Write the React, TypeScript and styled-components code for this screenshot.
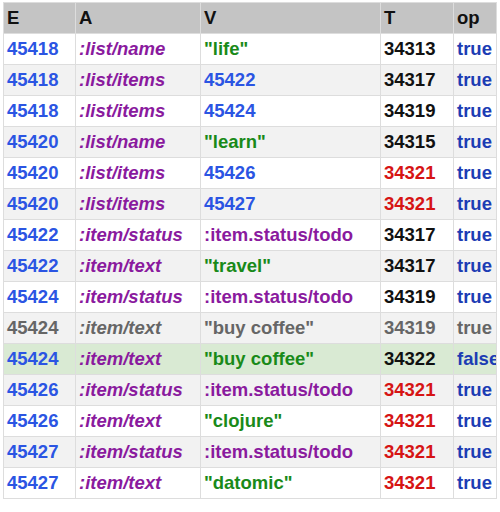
import React from "react";
import styled, { createGlobalStyle } from "styled-components";

const G = createGlobalStyle`body{margin:0;padding:2px 3px;font-family:"Liberation Sans",Arial,sans-serif;background:#fff;}`;
const Table = styled.table`border-collapse:collapse;table-layout:fixed;width:494px;font-weight:bold;font-size:18.5px;`;
const Th = styled.th<{ $w?: number }>`background:#c4c4c4;text-align:left;padding:0 3px;height:30px;border:1px solid #ddd;color:#111;width:${p => (p.$w ? p.$w + "px" : "auto")};`;
const Tr = styled.tr<{ $bg: string }>`background:${p => p.$bg};`;
const Td = styled.td<{ $c: string; $i?: boolean }>`border:1px solid #ddd;padding:0 3px;height:30px;color:${p => p.$c};font-style:${p => (p.$i ? "italic" : "normal")};white-space:nowrap;overflow:hidden;`;

const BLUE = "#2b55e3", PUR = "#8a1a9e", GRN = "#198a19", OP = "#1c3cb4", RED = "#d61414", GREY = "#666";
type R = [string, string, string, string, string];
const rows: R[] = [
  ["45418", ":list/name", '"life"', "34313", "true"],
  ["45418", ":list/items", "45422", "34317", "true"],
  ["45418", ":list/items", "45424", "34319", "true"],
  ["45420", ":list/name", '"learn"', "34315", "true"],
  ["45420", ":list/items", "45426", "34321", "true"],
  ["45420", ":list/items", "45427", "34321", "true"],
  ["45422", ":item/status", ":item.status/todo", "34317", "true"],
  ["45422", ":item/text", '"travel"', "34317", "true"],
  ["45424", ":item/status", ":item.status/todo", "34319", "true"],
  ["45424", ":item/text", '"buy coffee"', "34319", "true"],
  ["45424", ":item/text", '"buy coffee"', "34322", "false"],
  ["45426", ":item/status", ":item.status/todo", "34321", "true"],
  ["45426", ":item/text", '"clojure"', "34321", "true"],
  ["45427", ":item/status", ":item.status/todo", "34321", "true"],
  ["45427", ":item/text", '"datomic"', "34321", "true"],
];

export default function App() {
  return (
    <>
      <G />
      <Table>
        <thead>
          <tr>
            <Th $w={65}>E</Th>
            <Th $w={118}>A</Th>
            <Th $w={173}>V</Th>
            <Th $w={66}>T</Th>
            <Th>op</Th>
          </tr>
        </thead>
        <tbody>
          {rows.map((r, i) => {
            const grey = i === 9;
            const add = i === 10;
            const bg = add ? "#d9ead3" : i % 2 === 1 ? "#f2f2f2" : "#fff";
            const vc = r[2].startsWith('"') ? GRN : r[2].startsWith(":") ? PUR : BLUE;
            const tc = r[3] === "34321" ? RED : "#111";
            return (
              <Tr key={i} $bg={bg}>
                <Td $c={grey ? GREY : BLUE}>{r[0]}</Td>
                <Td $c={grey ? GREY : PUR} $i>{r[1]}</Td>
                <Td $c={grey ? GREY : vc}>{r[2]}</Td>
                <Td $c={grey ? GREY : tc}>{r[3]}</Td>
                <Td $c={grey ? GREY : OP}>{r[4]}</Td>
              </Tr>
            );
          })}
        </tbody>
      </Table>
    </>
  );
}
